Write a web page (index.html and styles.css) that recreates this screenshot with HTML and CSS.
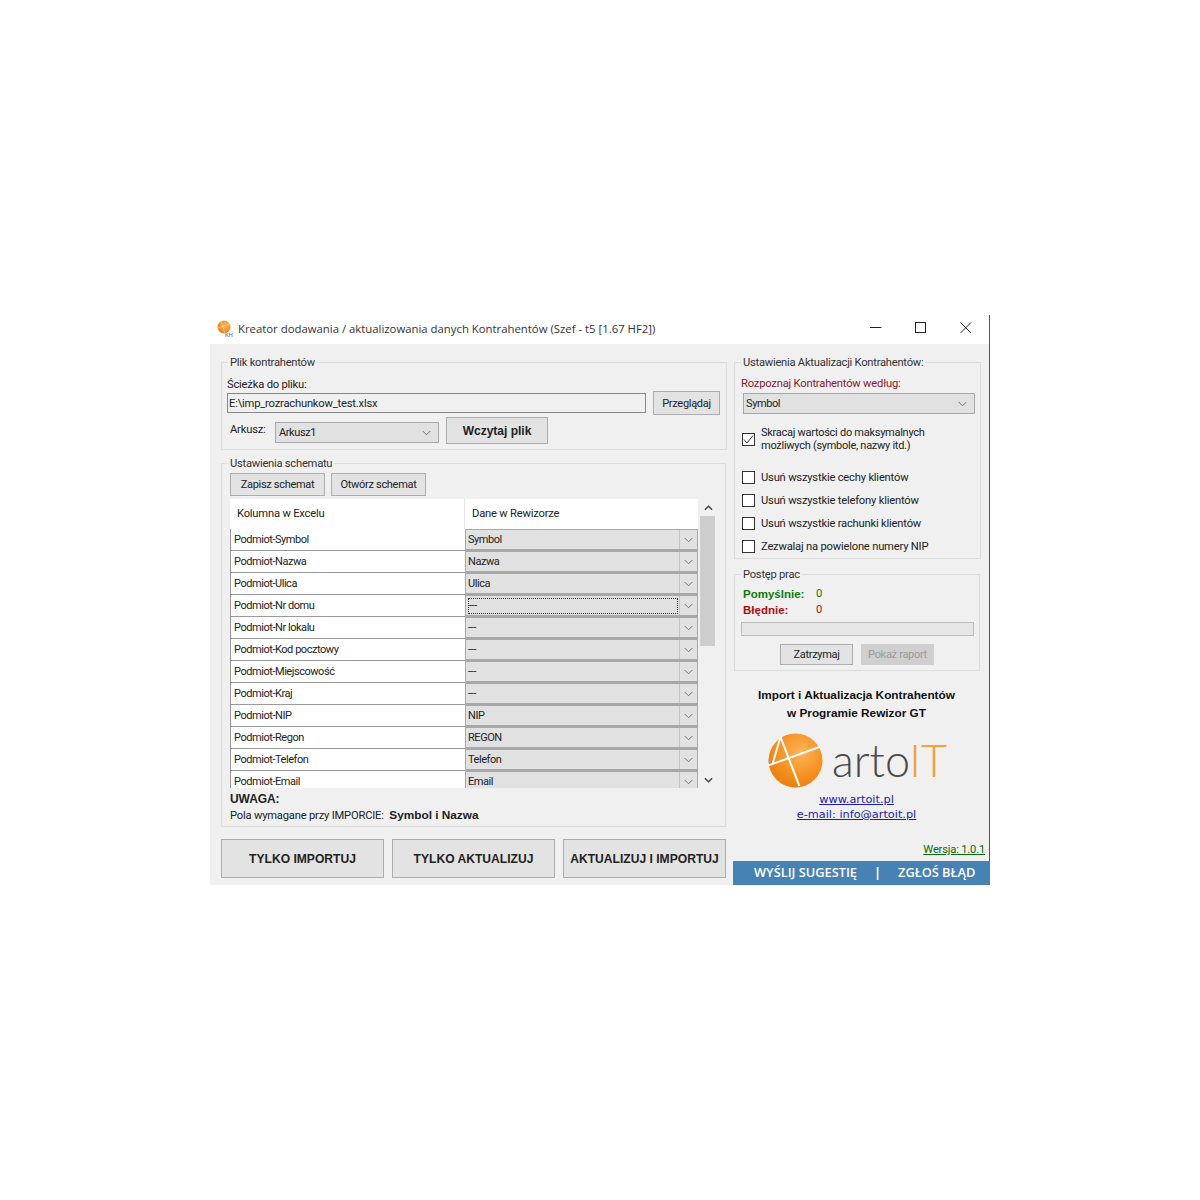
FILE: index.html
```html
<!DOCTYPE html>
<html lang="pl">
<head>
	<meta charset="UTF-8">
	<title>Kreator</title>
	<link rel="stylesheet" href="styles.css">
</head>
<body>
	<svg class="defs" width="0" height="0">
		<defs>
			<radialGradient id="ball" cx="0.6" cy="0.35" r="0.75">
				<stop offset="0" stop-color="#fdb45a"/>
				<stop offset="0.6" stop-color="#f5901e"/>
				<stop offset="1" stop-color="#e67a0c"/>
			</radialGradient>
			<symbol id="chev" viewBox="0 0 10 6">
				<path d="M.8.8 5 5 9.2.8" fill="none" stroke="#666" stroke-width="1"/>
			</symbol>
		</defs>
	</svg>
	<div class="window">
		<div class="titlebar">
			<div class="appicon">
				<svg width="14" height="14" viewBox="0 0 14 14"><circle cx="7" cy="7" r="6.5" fill="url(#ball)"/><path d="M4 1 8 13M1 8 13 4" stroke="#fff" stroke-width=".4"/></svg>
				<span class="kh">KH</span>
			</div>
			<div class="title">Kreator dodawania / aktualizowania danych Kontrahentów (Szef - t5 [1.67 HF2])</div>
			<div class="wincontrols">
				<svg width="12" height="12" viewBox="0 0 12 12"><path d="M0 5.5H11.500" stroke="#222"/></svg>
				<svg width="12" height="12" viewBox="0 0 12 12"><rect x=".5" y=".5" width="10" height="10" fill="none" stroke="#222"/></svg>
				<svg width="12" height="12" viewBox="0 0 12 12"><path d="M.5.5 11 11M11 .5.5 11" stroke="#222" fill="none"/></svg>
			</div>
		</div>
		<div class="content">
			<div class="leftcol">
				<fieldset class="group filegroup">
					<legend>Plik kontrahentów</legend>
					<div class="pathlabel">Ścieżka do pliku:</div>
					<div class="pathrow">
						<div class="textbox">E:\imp_rozrachunkow_test.xlsx</div>
						<button class="btn browse">Przeglądaj</button>
					</div>
					<div class="sheetrow">
						<span class="sheetlabel">Arkusz:</span>
						<div class="combo sheetcombo"><span class="val">Arkusz1</span><svg class="chev"><use href="#chev"/></svg></div>
						<button class="btn load">Wczytaj plik</button>
					</div>
				</fieldset>

				<fieldset class="group schemagroup">
					<legend>Ustawienia schematu</legend>
					<div class="schemabtns">
						<button class="btn save">Zapisz schemat</button>
						<button class="btn open">Otwórz schemat</button>
					</div>
					<div class="tablewrap">
						<div class="grid">
							<div class="headrow">
								<div class="headcell first">Kolumna w Excelu</div>
								<div class="headcell">Dane w Rewizorze</div>
							</div>
							<div class="rows">
								<div class="row"><div class="cell">Podmiot-Symbol</div><div class="rowcombo"><span class="val">Symbol</span><span class="arrow"><svg class="chev"><use href="#chev"/></svg></span></div></div>
								<div class="row"><div class="cell">Podmiot-Nazwa</div><div class="rowcombo"><span class="val">Nazwa</span><span class="arrow"><svg class="chev"><use href="#chev"/></svg></span></div></div>
								<div class="row"><div class="cell">Podmiot-Ulica</div><div class="rowcombo"><span class="val">Ulica</span><span class="arrow"><svg class="chev"><use href="#chev"/></svg></span></div></div>
								<div class="row"><div class="cell">Podmiot-Nr domu</div><div class="rowcombo focused"><span class="val">---</span><span class="arrow"><svg class="chev"><use href="#chev"/></svg></span></div></div>
								<div class="row"><div class="cell">Podmiot-Nr lokalu</div><div class="rowcombo"><span class="val">---</span><span class="arrow"><svg class="chev"><use href="#chev"/></svg></span></div></div>
								<div class="row"><div class="cell">Podmiot-Kod pocztowy</div><div class="rowcombo"><span class="val">---</span><span class="arrow"><svg class="chev"><use href="#chev"/></svg></span></div></div>
								<div class="row"><div class="cell">Podmiot-Miejscowość</div><div class="rowcombo"><span class="val">---</span><span class="arrow"><svg class="chev"><use href="#chev"/></svg></span></div></div>
								<div class="row"><div class="cell">Podmiot-Kraj</div><div class="rowcombo"><span class="val">---</span><span class="arrow"><svg class="chev"><use href="#chev"/></svg></span></div></div>
								<div class="row"><div class="cell">Podmiot-NIP</div><div class="rowcombo"><span class="val">NIP</span><span class="arrow"><svg class="chev"><use href="#chev"/></svg></span></div></div>
								<div class="row"><div class="cell">Podmiot-Regon</div><div class="rowcombo"><span class="val">REGON</span><span class="arrow"><svg class="chev"><use href="#chev"/></svg></span></div></div>
								<div class="row"><div class="cell">Podmiot-Telefon</div><div class="rowcombo"><span class="val">Telefon</span><span class="arrow"><svg class="chev"><use href="#chev"/></svg></span></div></div>
								<div class="row"><div class="cell">Podmiot-Email</div><div class="rowcombo"><span class="val">Email</span><span class="arrow"><svg class="chev"><use href="#chev"/></svg></span></div></div>
							</div>
						</div>
						<div class="scrollbar">
							<svg class="scrollarrow" width="9" height="6" viewBox="0 0 10 6"><path d="M1 5 5 1 9 5" fill="none" stroke="#444" stroke-width="1.6"/></svg>
							<div class="thumbtrack"><div class="thumb"></div></div>
							<svg class="scrollarrow" width="9" height="6" viewBox="0 0 10 6"><path d="M1 1 5 5 9 1" fill="none" stroke="#444" stroke-width="1.6"/></svg>
						</div>
					</div>
					<div class="note">
						<div class="notehead">UWAGA:</div>
						<div class="noteline">Pola wymagane przy IMPORCIE: <b>Symbol i Nazwa</b></div>
					</div>
				</fieldset>

				<div class="actions">
					<button class="btn action">TYLKO IMPORTUJ</button>
					<button class="btn action">TYLKO AKTUALIZUJ</button>
					<button class="btn action">AKTUALIZUJ I IMPORTUJ</button>
				</div>
			</div>

			<div class="rightcol">
				<fieldset class="group updategroup">
					<legend>Ustawienia Aktualizacji Kontrahentów:</legend>
					<div class="matchlabel">Rozpoznaj Kontrahentów według:</div>
					<div class="combo matchcombo"><span class="val">Symbol</span><svg class="chev"><use href="#chev"/></svg></div>
					<div class="check multi">
						<span class="box"><svg width="11" height="11" viewBox="0 0 11 11"><path d="M1 5.500 4 9 10 1.500" fill="none" stroke="#333" stroke-width="1"/></svg></span>
						<span>Skracaj wartości do maksymalnych<br>możliwych (symbole, nazwy itd.)</span>
					</div>
					<div class="check"><span class="box"></span><span>Usuń wszystkie cechy klientów</span></div>
					<div class="check"><span class="box"></span><span>Usuń wszystkie telefony klientów</span></div>
					<div class="check"><span class="box"></span><span>Usuń wszystkie rachunki klientów</span></div>
					<div class="check"><span class="box"></span><span>Zezwalaj na powielone numery NIP</span></div>
				</fieldset>

				<fieldset class="group progressgroup">
					<legend>Postęp prac</legend>
					<div class="stat ok"><b>Pomyślnie:</b><span>0</span></div>
					<div class="stat bad"><b>Błędnie:</b><span>0</span></div>
					<div class="progress"></div>
					<div class="progressbtns">
						<button class="btn stop">Zatrzymaj</button>
						<button class="btn report">Pokaż raport</button>
					</div>
				</fieldset>

				<div class="about">
					<div class="abouttitle">Import i Aktualizacja Kontrahentów<br>w Programie Rewizor GT</div>
					<div class="logo">
						<svg width="55" height="55" viewBox="0 0 56 56">
							<circle cx="28" cy="28" r="27.500" fill="url(#ball)"/>
							<path d="M12.700 4 32 54M.5 33 53 14M12.700 4 4.500 32" fill="none" stroke="#fff" stroke-width="2"/>
						</svg>
						<span class="wordmark">arto<span class="it">IT</span></span>
					</div>
					<a class="link" href="#">www.artoit.pl</a>
					<a class="link" href="#">e-mail: info@artoit.pl</a>
				</div>

				<div class="version"><a href="#">Wersja: 1.0.1</a></div>
				<div class="bluebar">
					<span>WYŚLIJ SUGESTIĘ</span>
					<span class="sep">|</span>
					<span>ZGŁOŚ BŁĄD</span>
				</div>
			</div>
		</div>
	</div>
</body>
</html>
```

FILE: styles.css
```css
*{
	box-sizing: border-box;
}
body{
	margin: 0;
	background: #fff;
	font-family: "Roboto", "Liberation Sans", sans-serif;
	font-size: 11.200px;
	letter-spacing: -.2px;
	color: #222;
}
.defs{
	position: absolute;
}
.window{
	width: 780px;
	height: 570px;
	margin: 315px 0 0 210px;
	display: flex;
	flex-direction: column;
	position: relative;
}
.titlebar{
	height: 29px;
	display: flex;
	align-items: center;
	background: #fff;
	border-right: 1px solid #555;
	padding: 0 0 3px 7px;
}
.appicon{
	width: 21px;
	height: 24px;
	position: relative;
	flex: none;
	padding-top: 4px;
}
.appicon svg{
	display: block;
}
.kh{
	position: absolute;
	left: 8px;
	top: 15px;
	font-size: 6px;
	color: #557;
}
.title{
	flex: 1;
	font-family: "Open Sans", sans-serif;
	font-size: 11.350px;
	letter-spacing: 0;
	color: #333;
}
.wincontrols{
	display: flex;
	gap: 33px;
	padding-right: 17px;
}
.content{
	flex: 1;
	display: flex;
	background: #f0f0f0;
	min-height: 0;
}
.leftcol{
	width: 523px;
	padding: 9px 0 0 11px;
}
.rightcol{
	flex: 1;
	display: flex;
	flex-direction: column;
	border-right: 1px solid #555;
	padding-top: 9px;
}
.group{
	margin: 0;
	border: 1px solid #dcdcdc;
	padding: 0;
	min-width: 0;
}
.group legend{
	padding: 2px 2px 0;
	line-height: 16px;
	letter-spacing: -.25px;
	color: #333;
}
.btn{
	font: inherit;
	font-size: 11px;
	letter-spacing: -.3px;
	color: #222;
	background: #e3e3e3;
	border: 1px solid #adadad;
	padding: 0;
	display: block;
}

/* plik */
.filegroup{
	width: 506px;
	height: 97px;
	padding: 0 5px;
}
.filegroup legend{
	margin-left: 1px;
}
.pathlabel{
	margin-top: 7px;
	line-height: 14px;
}
.pathrow{
	display: flex;
	align-items: center;
	gap: 7px;
	margin-top: -1px;
}
.textbox{
	width: 419px;
	height: 20px;
	border: 1px solid #888;
	background: #f0f0f0;
	line-height: 19px;
	padding-left: 1px;
}
.browse{
	width: 67px;
	height: 24px;
}
.sheetrow{
	display: flex;
	align-items: flex-start;
	margin-top: 2px;
}
.sheetlabel{
	width: 48px;
	padding-left: 3px;
	line-height: 14px;
	margin-top: 6px;
}
.combo{
	display: flex;
	align-items: center;
	justify-content: space-between;
	height: 21px;
	font-size: 11px;
	letter-spacing: -.4px;
	background: #e1e1e1;
	border: 1px solid #a8a8a8;
	padding: 0 7px 0 2px;
}
.chev{
	width: 9px;
	height: 6px;
	flex: none;
}
.sheetcombo{
	width: 164px;
	margin-top: 5px;
	padding-left: 3px;
}
.load{
	width: 102px;
	height: 27px;
	margin-left: 7px;
	font-family: "Liberation Sans", sans-serif;
	font-size: 12px;
	letter-spacing: 0;
	font-weight: bold;
}

/* schemat */
.schemagroup{
	width: 505px;
	height: 373px;
	margin-top: 4px;
	padding: 0 0 0 8px;
}
.schemagroup legend{
	margin-left: -2px;
}
.schemabtns{
	display: flex;
	gap: 6px;
	margin-top: 1px;
}
.save{
	width: 95px;
	height: 23px;
}
.open{
	width: 95px;
	height: 23px;
}
.tablewrap{
	display: flex;
	height: 289px;
	margin-top: 3px;
}
.grid{
	width: 468px;
	height: 289px;
	overflow: hidden;
	background: #fff;
}
.headrow{
	display: flex;
	height: 30px;
}
.headcell{
	flex: 1;
	line-height: 30px;
	padding-left: 7px;
}
.headcell.first{
	flex: none;
	width: 235px;
	border-right: 1px solid #e5e5e5;
}
.row{
	display: flex;
	height: 22px;
	font-size: 11px;
	letter-spacing: -.45px;
}
.cell{
	width: 235px;
	flex: none;
	border-left: 1px solid #999;
	border-bottom: 1px solid #999;
	line-height: 21px;
	padding-left: 3px;
}
.rowcombo{
	flex: 1;
	display: flex;
	height: 22px;
	background: #e1e1e1;
	border: 1px solid #a8a8a8;
	border-bottom-width: 2px;
	line-height: 19px;
	position: relative;
}
.rowcombo .val{
	flex: 1;
	padding-left: 2px;
}
.arrow{
	width: 18px;
	border-left: 1px solid #c4c4c4;
	display: flex;
	align-items: center;
	justify-content: center;
}
.focused .val{
	margin: 2px 1px 1px 2px;
	border: 1px dotted #333;
	line-height: 13px;
	padding-left: 0;
}
.scrollbar{
	width: 18px;
	margin-left: 1px;
	display: flex;
	flex-direction: column;
	align-items: center;
	justify-content: space-between;
	padding: 6px 0 5px;
}
.scrollarrow{
	flex: none;
}
.thumbtrack{
	flex: 1;
	width: 100%;
	padding-top: 5px;
}
.thumb{
	width: 15px;
	height: 130px;
	margin-left: 1px;
	background: #cdcdcd;
}
.note{
	line-height: 15px;
	margin-top: 4px;
}
.notehead{
	font-family: "Liberation Sans", sans-serif;
	font-size: 12px;
	letter-spacing: -.1px;
	font-weight: bold;
}
.noteline{
	margin-top: 1px;
}
.noteline b{
	font-family: "Liberation Sans", sans-serif;
	font-size: 11.800px;
	letter-spacing: 0;
	margin-left: 3px;
}
.actions{
	display: flex;
	gap: 8px;
	margin-top: 12px;
}
.action{
	width: 163px;
	height: 39px;
	font-family: "Liberation Sans", sans-serif;
	font-weight: bold;
	font-size: 12.100px;
	letter-spacing: 0;
}

/* prawa strona */
.updategroup{
	width: 247px;
	height: 206px;
	margin-left: 1px;
	padding: 0 5px 0 6px;
}
.matchlabel{
	color: #8b1a2b;
	line-height: 14px;
	margin-top: 6px;
}
.matchcombo{
	width: 232px;
	margin: 2px 0 0 2px;
}
.check{
	display: flex;
	align-items: center;
	gap: 6px;
	height: 23px;
	margin-left: 1px;
}
.check.multi{
	height: 26px;
	margin: 12px 0 14px 1px;
	line-height: 13px;
	font-size: 11px;
	letter-spacing: -.27px;
}
.box{
	width: 13px;
	height: 13px;
	flex: none;
	border: 1px solid #333;
	background: #fff;
	display: flex;
	align-items: center;
	justify-content: center;
}
.progressgroup{
	width: 246px;
	height: 106px;
	margin: 6px 0 0 1px;
	padding: 0 5px 0 6px;
}
.stat{
	display: flex;
	line-height: 16px;
	padding-left: 2px;
}
.stat b{
	width: 73px;
	font-family: "Liberation Sans", sans-serif;
	font-size: 11.500px;
	letter-spacing: 0;
}
.ok{
	color: #0a7a0a;
	margin-top: 3px;
}
.bad{
	color: #b00d14;
}
.progress{
	width: 233px;
	height: 14px;
	margin-top: 4px;
	border: 1px solid #bcbcbc;
	background: #e6e6e6;
}
.progressbtns{
	display: flex;
	gap: 8px;
	margin: 8px 0 0 39px;
}
.stop,
.report{
	width: 73px;
	height: 21px;
}
.report{
	background: #cfcfcf;
	border-color: #cfcfcf;
	color: #999;
}
.about{
	display: flex;
	flex-direction: column;
	align-items: center;
	margin-top: 15px;
	padding-right: 9px;
}
.abouttitle{
	font-family: "Liberation Sans", sans-serif;
	font-size: 11.800px;
	letter-spacing: 0;
	font-weight: bold;
	text-align: center;
	line-height: 18px;
	color: #111;
}
.logo{
	display: flex;
	align-items: center;
	height: 56px;
	margin: 10px 0 0 2px;
	gap: 9px;
}
.wordmark{
	font-family: "Lato", sans-serif;
	font-weight: 300;
	font-size: 45px;
	letter-spacing: 0;
	line-height: 56px;
	color: #4a4a4a;
}
.it{
	color: #f7a035;
}
.link{
	font-family: "DejaVu Sans", sans-serif;
	font-size: 11.300px;
	letter-spacing: 0;
	line-height: 15px;
	color: #1a1ab8;
}
.logo + .link{
	margin-top: 4px;
}
.version{
	margin-top: auto;
	text-align: right;
	padding: 0 4px 4px 0;
	line-height: 14px;
}
.version a{
	color: #0a6a0a;
}
.bluebar{
	height: 24px;
	background: #4682b4;
	color: #fff;
	display: flex;
	align-items: center;
	gap: 17px;
	padding: 0 0 2px 21px;
	font-family: "Open Sans", sans-serif;
	font-weight: 600;
	font-size: 12.800px;
	letter-spacing: 0;
	margin-right: -1px;
}
.sep{
	font-weight: bold;
}
```
